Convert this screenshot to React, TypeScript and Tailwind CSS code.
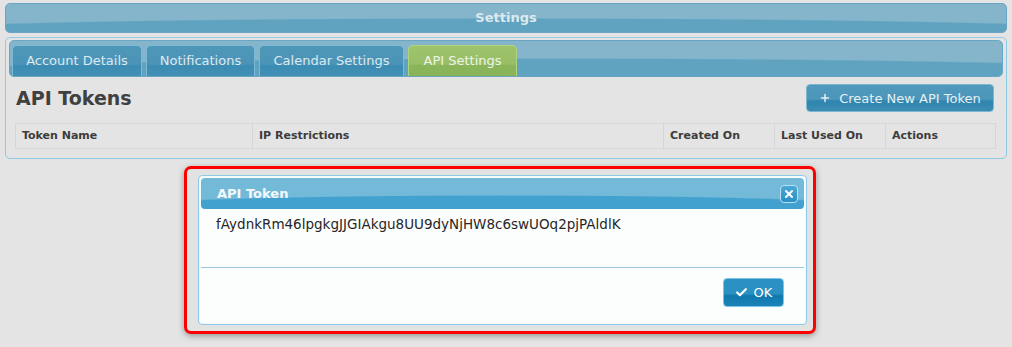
import { Check, Plus, X } from "lucide-react";

const cols = [
  { label: "Token Name", w: "w-[236px]" },
  { label: "IP Restrictions", w: "w-[411px]" },
  { label: "Created On", w: "w-[111px]" },
  { label: "Last Used On", w: "w-[111px]" },
  { label: "Actions", w: "flex-1" },
];

const tabs = [
  { label: "Account Details", w: "w-[130px]", active: false },
  { label: "Notifications", w: "w-[109px]", active: false },
  { label: "Calendar Settings", w: "w-[145px]", active: false },
  { label: "API Settings", w: "w-[109px]", active: true },
];

export default function App() {
  return (
    <div className="h-[347px] w-[1012px] overflow-hidden bg-[#e4e4e4] pt-[3px] font-['DejaVu_Sans',Verdana,sans-serif]">
      <div className="mx-[5px] flex h-[30px] items-center justify-center rounded-[5px] border border-[#6aa6c4] bg-[#84b5cb] bg-[radial-gradient(ellipse_650px_14px_at_50%_100%,#5fa3c1_93%,#84b5cb_100%)] text-[13px] font-bold text-[#dde9ef]">
        Settings
      </div>

      <div className="mx-[5px] mt-[4px] h-[122px] rounded-[5px] border border-[#8fcbe6] bg-[#e4e4e4] px-[3px] pt-[2px]">
        <div className="flex h-[37px] items-end gap-[4px] rounded-[5px] border border-[#6aa6c4] bg-[#84b5cb] bg-[radial-gradient(ellipse_700px_18px_at_55%_100%,#5fa3c1_93%,#84b5cb_100%)] pl-[2px]">
          {tabs.map((t) => (
            <div
              key={t.label}
              className={
                t.active
                  ? `${t.w} flex h-[31px] items-center justify-center rounded-t-[5px] border border-b-0 border-[#b3d47e] bg-[linear-gradient(180deg,#9dc46c_0%,#98bf67_60%,#8ab55b_64%,#88b359_100%)] text-[13px] text-[#eef4e6]`
                  : `${t.w} flex h-[31px] items-center justify-center rounded-t-[5px] border border-b-0 border-[#7db9d6] bg-[linear-gradient(180deg,#4f97b9_0%,#4b94b7_60%,#3b8bb2_66%,#4390b5_100%)] text-[13px] text-[#dbe9f1]`
              }
            >
              {t.label}
            </div>
          ))}
        </div>

        <div className="flex items-center justify-between pl-[7px] pr-[9px] pt-[7px]">
          <h1 className="text-[19px] font-bold text-[#404040]">API Tokens</h1>
          <button
            type="button"
            className="flex h-[28px] w-[188px] items-center justify-center gap-[8px] rounded-[4px] border border-[#7cb6d3] bg-[linear-gradient(180deg,#5199bc_0%,#4b96ba_55%,#2f85ae_62%,#3c8db3_100%)] text-[13px] text-[#e6f0f5]"
          >
            <Plus size={12} strokeWidth={3} />
            Create New API Token
          </button>
        </div>

        <div className="ml-[6px] mr-[7px] mt-[10px] flex h-[26px] border border-[#d6d6d6]">
          {cols.map((c, i) => (
            <div
              key={c.label}
              className={`${c.w} flex items-center px-[6px] pt-[2px] text-[11px] font-bold text-[#3c3c3c] ${i > 0 ? "border-l border-[#d6d6d6]" : ""}`}
            >
              {c.label}
            </div>
          ))}
        </div>
      </div>

      <div className="ml-[184px] mt-[7px] h-[168px] w-[632px] rounded-[7px] border-[3px] border-[#ff0000] bg-[#e2e2e2] pl-[11px] pr-[6px] pt-[6px] shadow-[0_2px_6px_rgba(0,0,0,0.35)]">
        <div className="h-[150px] rounded-[4px] border border-[#8ccbe8] bg-[#fcfdfd] p-[2px] shadow-[inset_0_0_2px_rgba(0,0,0,0.1)]">
          <div className="flex h-[31px] items-center justify-between rounded-[4px] bg-[#73bad9] bg-[radial-gradient(ellipse_420px_14px_at_50%_100%,#43a1cf_93%,#73bad9_100%)] pl-[16px] pr-[6px]">
            <span className="text-[13px] font-bold text-[#f3f8fb]">API Token</span>
            <span className="flex h-[18px] w-[18px] items-center justify-center rounded-[4px] border border-[#b8e0f2] bg-[linear-gradient(180deg,#4aa8d6_0%,#2b8fc3_100%)] text-white">
              <X size={12} strokeWidth={4} />
            </span>
          </div>
          <div className="h-[58px] pl-[15px] pt-[5px] text-[13.5px] text-[#262626]">
            fAydnkRm46lpgkgJJGIAkgu8UU9dyNjHW8c6swUOq2pjPAldlK
          </div>
          <div className="border-t border-[#9cc6dc]" />
          <div className="flex justify-end pr-[20px] pt-[10px]">
            <button
              type="button"
              className="flex h-[29px] w-[61px] items-center justify-center gap-[6px] rounded-[4px] border border-[#7cc3e6] bg-[linear-gradient(180deg,#2b92c3_0%,#2a90c1_55%,#0f79ae_62%,#1a82b6_100%)] text-[13px] text-white"
            >
              <Check size={13} strokeWidth={4} />
              OK
            </button>
          </div>
        </div>
      </div>
    </div>
  );
}
